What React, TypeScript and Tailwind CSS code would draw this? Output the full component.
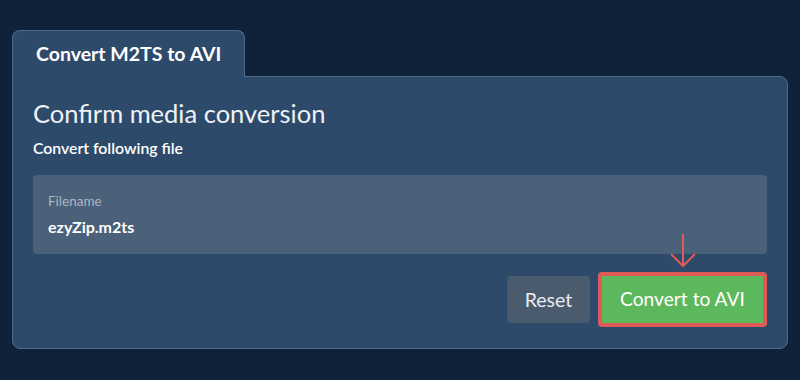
import React from 'react';

export default function App() {
  return (
    <div
      className="w-[800px] h-[380px] bg-[#10223a] pt-[30px] px-3"
      style={{ fontFamily: 'Lato, "Open Sans", sans-serif' }}
    >
      {/* Tab */}
      <div className="inline-flex items-center h-[47px] px-[23px] bg-[#2e4a6a] border border-b-0 border-[#4f6a8a] rounded-t-lg relative z-10">
        <span className="text-white font-bold text-[19.5px] leading-none">Convert M2TS to AVI</span>
      </div>

      {/* Panel */}
      <div className="-mt-px w-[776px] bg-[#2e4a6a] border border-[#4f6a8a] rounded-b-lg rounded-tr-lg px-5 pt-5 pb-[21px]">
        <h1 className="text-[25.5px] leading-8 text-[#eef2f6]">Confirm media conversion</h1>
        <p className="mt-[10px] text-[15.8px] leading-[18px] font-semibold text-white">Convert following file</p>

        <div className="mt-[18px] h-[79px] bg-[#4b6079] rounded px-[15px] pt-[17px]">
          <div className="text-[13.5px] leading-[18px] text-[#aab6c4]">Filename</div>
          <div className="mt-[6px] text-[16px] leading-[22px] font-bold text-white">ezyZip.m2ts</div>
        </div>

        <div className="mt-[18px] flex justify-end items-center gap-2">
          <button className="h-[47px] w-[83px] rounded bg-[#4b5b6e] text-[#e8ecf0] text-[19.5px]">Reset</button>
          <div className="relative">
            <svg
              className="absolute left-1/2 -translate-x-1/2 -top-[40px]"
              width="28"
              height="36"
              viewBox="0 0 28 36"
              fill="none"
              stroke="#e05a57"
              strokeWidth="2"
            >
              <path d="M14 2 V34" />
              <path d="M2 22 L14 34 L26 22" />
            </svg>
            <button className="h-[55px] w-[169px] rounded bg-[#5cb85c] border-4 border-[#e05a57] text-white text-[19.2px]">
              Convert to AVI
            </button>
          </div>
        </div>
      </div>
    </div>
  );
}
